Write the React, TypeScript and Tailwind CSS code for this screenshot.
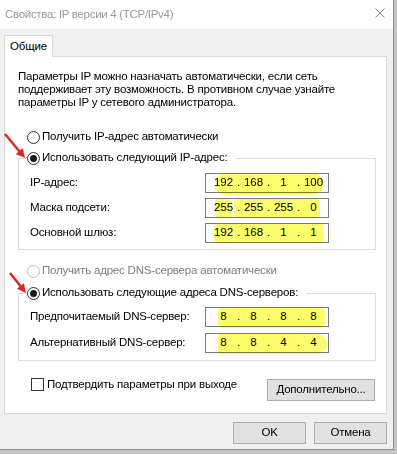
import React from "react";

type Mark = { cls: string };

const Radio = ({ label, checked, disabled }: { label: string; checked?: boolean; disabled?: boolean }) => (
  <div className="flex items-center h-[16px] gap-[2px]">
    <span
      className={
        disabled
          ? "w-[13px] h-[13px] rounded-full border border-[#bcbcbc] bg-white flex items-center justify-center"
          : "w-[13px] h-[13px] rounded-full border border-[#333333] bg-white flex items-center justify-center"
      }
    >
      {checked && <span className="w-[7px] h-[7px] rounded-full bg-[#1a1a1a]" />}
    </span>
    <span className={disabled ? "text-[#7d7d7d]" : ""}>{label}</span>
  </div>
);

const IpBox = ({ octets, marks }: { octets: string[]; marks: Mark[] }) => (
  <div className="relative w-[124px] h-[20px] border border-[#7a7a7a] bg-white flex items-center pl-[6px] tracking-normal">
    {octets.map((o, i) => (
      <React.Fragment key={i}>
        {i > 0 && <span className="w-[7px] text-center">.</span>}
        <span className="w-[23px] text-center">{o}</span>
      </React.Fragment>
    ))}
    {marks.map((m, i) => (
      <span key={i} className={"absolute bg-[#fdfd6c] mix-blend-multiply pointer-events-none " + m.cls} />
    ))}
  </div>
);

const Row = ({ label, children }: { label: string; children: React.ReactNode }) => (
  <div className="flex items-center">
    <span className="w-[175px]">{label}</span>
    {children}
  </div>
);

const Btn = ({ label, className }: { label: string; className: string }) => (
  <div className={"bg-[#e1e1e1] border border-[#adadad] flex items-center justify-center " + className}>{label}</div>
);

export default function App() {
  return (
    <div className="w-[397px] h-[454px] bg-[#c4c4c4] font-['Liberation_Sans',sans-serif] text-[11.5px] tracking-[-0.2px] text-black">
      <div className="relative w-[394px] h-[450px] bg-[#f0f0f0] border-r border-b border-[#8c8c8c] flex flex-col">
        {/* title bar */}
        <div className="h-[29px] bg-white flex items-center justify-between pl-[5px] pr-[8px] text-[#9a9a9a] text-[11.5px] tracking-[-0.3px]">
          <span>Свойства: IP версии 4 (TCP/IPv4)</span>
          <svg width="10" height="10" viewBox="0 0 10 10" className="mb-[3px]">
            <path d="M0.5 0.5 L9.5 9.5 M9.5 0.5 L0.5 9.5" stroke="#8a8a8a" strokeWidth="1" />
          </svg>
        </div>

        <div className="px-[4px] pt-[6px]">
          <div className="relative z-10 w-[49px] h-[22px] -mb-[1px] bg-white border border-b-0 border-[#d9d9d9] flex items-center justify-center">
            Общие
          </div>
          <div className="w-[383px] h-[358px] bg-white border border-[#d9d9d9] pl-[13px] pt-[13px]">
            <p className="leading-[13px]">
              Параметры IP можно назначать автоматически, если сеть
              <br />
              поддерживает эту возможность. В противном случае узнайте
              <br />
              параметры IP у сетевого администратора.
            </p>

            <div className="mt-[20px] ml-[9px]">
              <Radio label="Получить IP-адрес автоматически" />
            </div>

            <fieldset className="mt-[5px] w-[358px] border border-[#dcdcdc]">
              <legend className="ml-[7px] pl-[1px] pr-[8px]">
                <Radio label="Использовать следующий IP-адрес:" checked />
              </legend>
              <div className="flex flex-col gap-[5px] pl-[11px] pt-[7px] pb-[6px]">
                <Row label="IP-адрес:">
                  <IpBox octets={["192", "168", "1", "100"]} marks={[{ cls: "left-[9px] -top-[1px] w-[108px] h-[22px] rounded-[10px]" }]} />
                </Row>
                <Row label="Маска подсети:">
                  <IpBox
                    octets={["255", "255", "255", "0"]}
                    marks={[
                      { cls: "left-[9px] top-0 w-[17px] h-[19px] rounded-[3px]" },
                      { cls: "left-[28px] top-0 w-[86px] h-[19px] rounded-[4px]" },
                    ]}
                  />
                </Row>
                <Row label="Основной шлюз:">
                  <IpBox octets={["192", "168", "1", "1"]} marks={[{ cls: "left-[8px] top-0 w-[110px] h-[19px] rounded-[4px]" }]} />
                </Row>
              </div>
            </fieldset>

            <div className="mt-[13px] ml-[9px]">
              <Radio label="Получить адрес DNS-сервера автоматически" disabled />
            </div>

            <fieldset className="mt-[6px] w-[358px] border border-[#dcdcdc]">
              <legend className="ml-[7px] pl-[1px] pr-[8px]">
                <Radio label="Использовать следующие адреса DNS-серверов:" checked />
              </legend>
              <div className="flex flex-col gap-[6px] pl-[11px] pt-[6px] pb-[7px]">
                <Row label="Предпочитаемый DNS-сервер:">
                  <IpBox octets={["8", "8", "8", "8"]} marks={[{ cls: "left-[12px] -top-[1px] w-[107px] h-[21px] rounded-[5px]" }]} />
                </Row>
                <Row label="Альтернативный DNS-сервер:">
                  <IpBox octets={["8", "8", "4", "4"]} marks={[{ cls: "left-[12px] top-0 w-[109px] h-[20px] rounded-r-[10px] rounded-l-[3px]" }]} />
                </Row>
              </div>
            </fieldset>

            <div className="mt-[17px] w-[357px] flex justify-between items-start">
              <div className="ml-[13px] flex items-center gap-[3px] h-[13px]">
                <span className="w-[13px] h-[13px] border border-[#333333] bg-white" />
                <span>Подтвердить параметры при выходе</span>
              </div>
              <Btn label="Дополнительно..." className="mt-[1px] w-[108px] h-[22px]" />
            </div>
          </div>

          <div className="mt-[8px] w-[383px] flex justify-end gap-[8px]">
            <Btn label="OK" className="w-[73px] h-[22px]" />
            <Btn label="Отмена" className="w-[73px] h-[22px]" />
          </div>
        </div>

        {/* red annotation arrows */}
        <svg className="absolute left-0 top-0 pointer-events-none" width="394" height="450">
          <line x1="5" y1="134" x2="19.5" y2="151.5" stroke="#e3261f" strokeWidth="2.5" />
          <polygon points="25,158 22.7,148.2 15.7,154" fill="#e3261f" />
          <line x1="10" y1="273" x2="20.8" y2="286.5" stroke="#e3261f" strokeWidth="2.5" />
          <polygon points="26,293 23.9,283.2 16.9,288.8" fill="#e3261f" />
        </svg>
      </div>
    </div>
  );
}
